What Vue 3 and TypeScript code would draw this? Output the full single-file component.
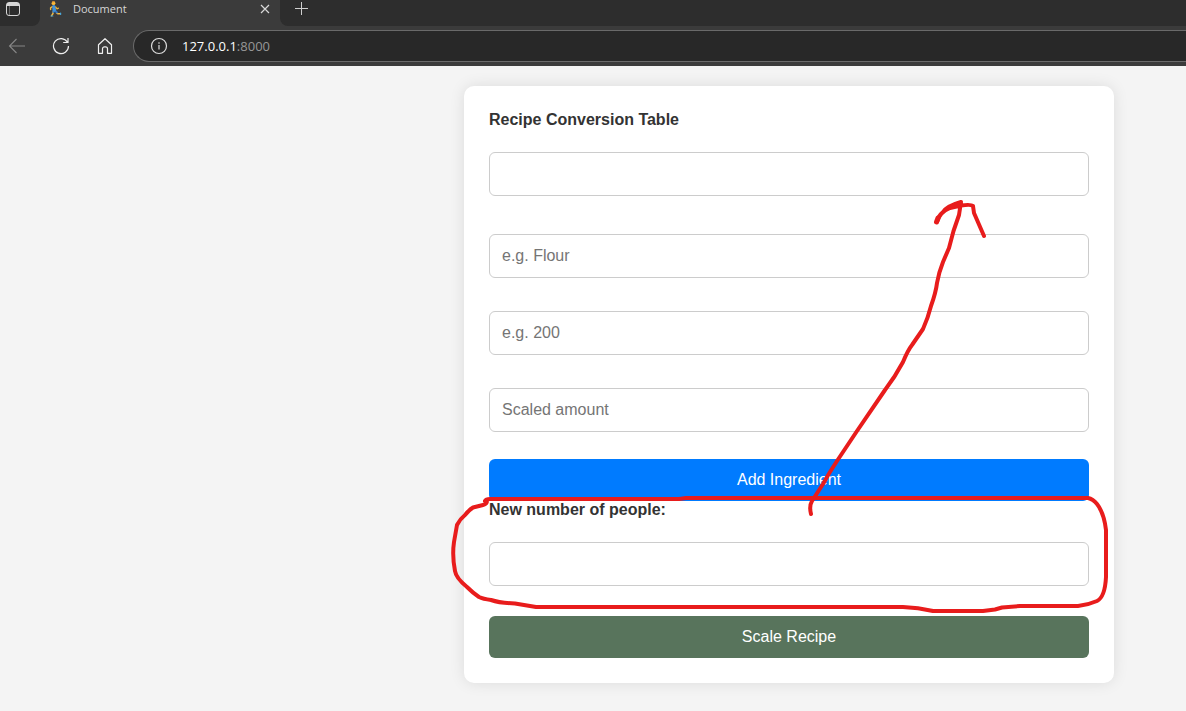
<script setup lang="ts">
import { ref } from 'vue'

interface Field {
  key: string
  label: string
  placeholder: string
}

const ingredientFields: Field[] = [
  { key: 'name', label: 'Ingredient', placeholder: 'e.g. Flour' },
  { key: 'amount', label: 'Amount', placeholder: 'e.g. 200' },
  { key: 'scaled', label: 'Scaled amount', placeholder: 'Scaled amount' },
]

const values = ref<Record<string, string>>({ name: '', amount: '', scaled: '' })
const recipe = ref('')
const people = ref('')
</script>

<template>
  <div class="window">
    <header class="browser">
      <div class="tabs">
        <div class="strip strip-start">
          <button class="icon-button" type="button" aria-label="Tab actions">
            <svg width="16" height="16" viewBox="0 0 16 16" fill="none" stroke="#d6d6d6">
              <rect x="1.5" y="1.5" width="13" height="13" rx="2.5" />
              <path d="M2 3.500h12" stroke-width="3" />
              <path d="M4.500 5v9" stroke="#6c6c6c" />
            </svg>
          </button>
        </div>
        <div class="tab">
          <svg class="favicon" width="16" height="16" viewBox="0 0 16 16" fill="none" stroke-linecap="round" stroke-linejoin="round">
            <path d="M4.500 5.500 2.600 6.800V8.600" stroke="#f0b840" stroke-width="1.4" />
            <path d="M5.200 10.500 5 12.500 3.600 14.600" stroke="#f0b840" stroke-width="1.5" />
            <path d="M8.500 12 10 12.800h2" stroke="#f0b840" stroke-width="1.400" />
            <path d="M5.500 9.500V11M7 9.500 8.800 11.400" stroke="#3178c8" stroke-width="2" />
            <path d="M5.900 5.800 6.300 9" stroke="#3f93da" stroke-width="3.4" />
            <path d="M7.800 6 9 7.800l1.400-.6" stroke="#e9b13a" stroke-width="1.3" />
            <path d="M3 15h1.800M12.600 12v1.400" stroke="#4aa7d8" stroke-width="1.2" />
            <circle cx="5.500" cy="2.200" r="1.900" fill="#f8b93a" />
            <path d="M4.500.900 6.200.700" stroke="#d5862c" />
          </svg>
          <span class="tab-title">Document</span>
          <button class="icon-button" type="button" aria-label="Close tab">
            <svg width="10" height="10" viewBox="0 0 10 10" fill="none" stroke="#d8d8d8" stroke-width="1.2">
              <path d="m1 1 8 8M9 1 1 9" />
            </svg>
          </button>
        </div>
        <div class="strip strip-end">
          <button class="icon-button" type="button" aria-label="New tab">
            <svg width="15" height="15" viewBox="0 0 15 15" fill="none" stroke="#cfcfcf">
              <path d="M7.5 1v13M1 7.5h13" />
            </svg>
          </button>
        </div>
      </div>
      <div class="toolbar">
        <button class="icon-button" type="button" aria-label="Back">
          <svg width="18" height="18" viewBox="0 0 18 18" fill="none" stroke="#868686" stroke-width="1.1">
            <path d="M17 9H1.5M8.500 2 1.500 9l7 7" />
          </svg>
        </button>
        <button class="icon-button" type="button" aria-label="Refresh">
          <svg width="18" height="18" viewBox="0 0 18 18" fill="none" stroke="#efefef" stroke-width="1.2">
            <path d="M16.500 9A7.500 7.500 0 1 1 15.500 5.300M16 1v4.500h-4.800" />
          </svg>
        </button>
        <button class="icon-button" type="button" aria-label="Home">
          <svg width="18" height="18" viewBox="0 0 18 18" fill="none" stroke="#efefef" stroke-width="1.2" stroke-linejoin="round">
            <path d="M2.500 7.800 9 1.700l6.500 6.100v8.500h-4v-4.500a2 2 0 0 0-2-2H8.500a2 2 0 0 0-2 2v4.500h-4z" />
          </svg>
        </button>
        <div class="address">
          <svg width="18" height="18" viewBox="0 0 18 18" fill="none" stroke="#dcdcdc" stroke-width="1.2">
            <circle cx="9" cy="9" r="7.500" />
            <path d="M9 8v4.500M9 5.200v1.500" />
          </svg>
          <span class="url">127.0.0.1<span class="port">:8000</span></span>
        </div>
      </div>
    </header>

    <main class="page">
      <form class="card" @submit.prevent>
        <label class="label" for="recipe">Recipe Conversion Table</label>
        <input id="recipe" v-model="recipe" class="input" type="text" />

        <div class="fields">
          <input
            v-for="field in ingredientFields"
            :key="field.key"
            v-model="values[field.key]"
            class="input"
            type="text"
            :aria-label="field.label"
            :placeholder="field.placeholder"
          />
        </div>
        <button class="button add" type="button">Add Ingredient</button>

        <label class="label" for="people">New number of people:</label>
        <input id="people" v-model="people" class="input" type="text" />
        <button class="button scale" type="submit">Scale Recipe</button>

        <svg class="ink" viewBox="464 86 650 597" preserveAspectRatio="none" aria-hidden="true">
          <path
            d="M811 514Q809 506 812 501L823 484Q829 473 837 461L857 431 885 390Q895 377 903 362 908 350 912 345L923 329Q928 318 931 306 936 292 937 283 939 272 943 262L949 248 953.500 231 959 215 961 202Q947 206 943 212 938 216 937 222Q940 212 950 208L961 205.500Q971 204 973 206L974 213 984 236"
          />
          <path d="M936.500 222 938 218" stroke-width="5" />
          <path
            d="M485 501Q486 499 490 499H679L686 498H1088Q1093 499 1097 504 1104 513 1106 530V577Q1105 597 1097 601 1088 605 1078 606H1020L1002 607.500 995 609.500 983 611H933Q918 607.500 903 607H536L515 603.500Q500 603 491 600 483 599 479 597 473 593 467 587 456 578 455 571 452 556 454 542L457 525Q460 519 465 515 469 510 473 507.500L483 505Q487 504 487 501"
          />
        </svg>
      </form>
    </main>
  </div>
</template>

<style>
body {
  margin: 0;
  background: #f4f4f4;
}
</style>

<style scoped>
.window {
  min-height: 100vh;
  background: #f4f4f4;
  font-family: "Liberation Sans", Arial, sans-serif;
}

.browser {
  background: #3b3b3b;
  font-family: "Open Sans", "Noto Sans", sans-serif;
}

.tabs {
  display: flex;
  height: 26px;
  background: #3b3b3b;
}

.strip {
  display: flex;
  align-items: flex-start;
  box-sizing: border-box;
  background: #2d2d2d;
}

.strip-start {
  width: 40px;
  padding: 1px 5px;
  border-bottom-right-radius: 8px;
}

.strip-end {
  flex: 1;
  padding: 1px 14px;
  border-bottom-left-radius: 8px;
}

.tab {
  display: flex;
  align-items: center;
  box-sizing: border-box;
  width: 240px;
  height: 18px;
  padding: 0 10px 0 8px;
}

.tab-title {
  flex: 1;
  margin-left: 9px;
  color: #d6d6d6;
  font-size: 11px;
  line-height: 18px;
}

.icon-button {
  display: block;
  padding: 0;
  border: 0;
  background: none;
}

.icon-button svg,
.address svg,
.favicon {
  display: block;
  flex: none;
}

.toolbar {
  display: flex;
  align-items: center;
  gap: 26px;
  height: 40px;
  padding-left: 8px;
}

.address {
  display: flex;
  flex: 1;
  align-items: center;
  gap: 14px;
  box-sizing: border-box;
  height: 32px;
  margin-left: -7px;
  padding-left: 16px;
  border: 1px solid #6a6a6a;
  border-right: 0;
  border-radius: 16px 0 0 16px;
  background: #282828;
}

.url {
  color: #ffffff;
  font-size: 13px;
  line-height: 18px;
}

.port {
  color: #979797;
}

.page {
  display: flex;
  justify-content: flex-end;
  padding: 20px 72px 28px 24px;
}

.card {
  position: relative;
  display: flex;
  flex-direction: column;
  box-sizing: border-box;
  width: 100%;
  max-width: 650px;
  padding: 25px;
  border-radius: 10px;
  background: #ffffff;
  box-shadow: 0 0 15px rgba(0, 0, 0, 0.1);
}

.label {
  margin-bottom: 23px;
  color: #333333;
  font-size: 16px;
  font-weight: bold;
  line-height: 18px;
}

.input {
  box-sizing: border-box;
  width: 100%;
  height: 44px;
  padding: 0 12px;
  border: 1px solid #cccccc;
  border-radius: 6px;
  background: #ffffff;
  color: #333333;
  font-family: inherit;
  font-size: 16px;
}

.input::placeholder {
  color: #757575;
  opacity: 1;
}

.fields {
  display: flex;
  flex-direction: column;
  gap: 33px;
  margin: 38px 0 27px;
}

.button {
  height: 42px;
  padding: 0 12px;
  border: 0;
  border-radius: 6px;
  color: #ffffff;
  font-family: inherit;
  font-size: 16px;
}

.add {
  background: #007bff;
}

.scale {
  margin-top: 30px;
  background: #58745c;
}

.ink {
  position: absolute;
  inset: 0;
  width: 100%;
  height: 100%;
  overflow: visible;
  fill: none;
  stroke: #e81c1c;
  stroke-width: 4px;
  stroke-linecap: round;
  stroke-linejoin: round;
  pointer-events: none;
}
</style>
